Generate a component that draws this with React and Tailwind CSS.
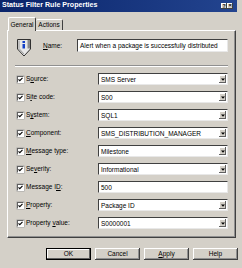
import React from 'react'

const rows = [
  { pre: 'S', u: 'o', post: 'urce:', value: 'SMS Server', combo: true },
  { pre: 'S', u: 'i', post: 'te code:', value: 'S00', combo: true },
  { pre: 'S', u: 'y', post: 'stem:', value: 'SQL1', combo: true },
  { pre: '', u: 'C', post: 'omponent:', value: 'SMS_DISTRIBUTION_MANAGER', combo: true },
  { pre: '', u: 'M', post: 'essage type:', value: 'Milestone', combo: true },
  { pre: 'Se', u: 'v', post: 'erity:', value: 'Informational', combo: true },
  { pre: 'Message I', u: 'D', post: ':', value: '500', combo: false },
  { pre: '', u: 'P', post: 'roperty:', value: 'Package ID', combo: true },
  { pre: 'Property ', u: 'v', post: 'alue:', value: 'S0000001', combo: true },
]

function Check() {
  return (
    <div className="w-[7px] h-[7px] bg-white border border-t-[#606060] border-l-[#606060] border-r-white border-b-white shadow-[0_0_0_0.5px_#a0a0a0] flex items-center justify-center shrink-0">
      <svg width="5" height="5" viewBox="0 0 5 5">
        <polyline points="0.5,2.3 1.8,3.6 4.5,0.8" fill="none" stroke="#000" strokeWidth="1.1" />
      </svg>
    </div>
  )
}

function Field({ value, combo }) {
  return (
    <div className="w-[130px] h-[12px] bg-white border border-t-[#404040] border-l-[#404040] border-r-[#e8e8e8] border-b-[#e8e8e8] flex items-center pl-[2px] pr-[1px]">
      <span className="flex-1 text-[6.5px] leading-[9px] text-black whitespace-nowrap">{value}</span>
      {combo && (
        <div className="w-[7px] h-[8px] bg-[#d4d0c8] shadow-[inset_-1px_-1px_#606060,inset_1px_1px_#fff] flex items-center justify-center">
          <svg width="4" height="3" viewBox="0 0 4 3">
            <polygon points="0,0.5 4,0.5 2,2.7" fill="#000" />
          </svg>
        </div>
      )}
    </div>
  )
}

function Btn({ children, def }) {
  return (
    <div className={'w-[45px] h-[12px] bg-[#d4d0c8] flex items-center justify-center text-[6.5px] text-black ' + (def ? 'border border-black shadow-[inset_-1px_-1px_#606060,inset_1px_1px_#fff]' : 'shadow-[inset_-1px_-1px_#404040,inset_1px_1px_#fff,inset_-2px_-2px_#909090]')}>
      {children}
    </div>
  )
}

export default function App() {
  return (
    <div className="w-[242px] h-[268px] bg-[#d4d0c8] overflow-hidden font-['Liberation_Sans',Arial,sans-serif] text-black">
      {/* title bar */}
      <div className="w-[237px] h-[12px] bg-gradient-to-r from-[#0a246a] to-[#23448f] flex items-center pl-[2px] pr-[4px]">
        <span className="flex-1 text-white font-bold text-[7.1px] leading-none whitespace-nowrap">Status Filter Rule Properties</span>
        <div className="w-[6px] h-[6px] bg-[#d4d0c8] shadow-[inset_-1px_-1px_#404040,inset_1px_1px_#fff] flex items-center justify-center text-[5px] font-bold leading-none">?</div>
        <div className="w-[6px] h-[6px] bg-[#d4d0c8] shadow-[inset_-1px_-1px_#404040,inset_1px_1px_#fff] flex items-center justify-center text-[5.5px] font-bold leading-none">×</div>
      </div>

      {/* tabs */}
      <div className="flex items-end ml-[8px] mt-[5px] h-[13px]">
        <div className="w-[28px] h-[14px] -mb-[1px] relative z-10 bg-[#d4d0c8] border-t border-l border-t-white border-l-white border-r border-r-[#404040] rounded-t-[2px] flex items-center justify-center text-[6.5px]">
          General
        </div>
        <div className="w-[27px] h-[11px] bg-[#d4d0c8] border-t border-t-white border-r border-r-[#404040] rounded-t-[2px] flex items-center justify-center text-[6.5px]">
          Actions
        </div>
      </div>

      {/* panel */}
      <div className="ml-[7px] w-[229px] h-[208px] border border-t-white border-l-white border-r-[#404040] border-b-[#404040] shadow-[inset_-1px_-1px_#909090]">
        <div className="flex items-start mt-[7px] ml-[8px]">
          <svg width="16" height="19" viewBox="0 0 16 19" className="shrink-0">
            <path d="M1.5 1.5 H14.5 V11 L8 18 L1.5 11 Z" fill="#e8e8e8" stroke="#303030" />
            <path d="M3 2.5 V10.5 L8 16" fill="none" stroke="#9a9a9a" />
            <rect x="11.5" y="2" width="2.5" height="8.5" fill="#8a8a8a" />
            <rect x="6.5" y="3" width="2.5" height="2" fill="#1440c8" />
            <rect x="6.5" y="6" width="2.5" height="4.5" fill="#1440c8" />
          </svg>
          <div className="flex items-center mt-[1px]">
            <span className="w-[34px] ml-[11px] text-[6.5px]"><u>N</u>ame:</span>
            <div className="w-[151px] h-[13px] bg-white border border-t-[#404040] border-l-[#404040] border-r-[#e8e8e8] border-b-[#e8e8e8] flex items-center pl-[2px] text-[6.5px] whitespace-nowrap">
              Alert when a package is successfully distributed
            </div>
          </div>
        </div>

        <div className="ml-[7px] mt-[8px] w-[213px] h-[2px] border-t border-t-[#909090] border-b border-b-white" />

        <div className="flex flex-col gap-[6px] mt-[6px] ml-[9px]">
          {rows.map((r, i) => (
            <div key={i} className="flex items-center h-[12px]">
              <Check />
              <span className="ml-[2px] w-[72px] text-[6.5px] whitespace-nowrap">
                {r.pre}<u>{r.u}</u>{r.post}
              </span>
              <Field value={r.value} combo={r.combo} />
            </div>
          ))}
        </div>
      </div>

      {/* buttons */}
      <div className="flex gap-[4px] ml-[46px] mt-[10px]">
        <Btn def>OK</Btn>
        <Btn>Cancel</Btn>
        <Btn><u>A</u>pply</Btn>
        <Btn>Help</Btn>
      </div>
    </div>
  )
}
